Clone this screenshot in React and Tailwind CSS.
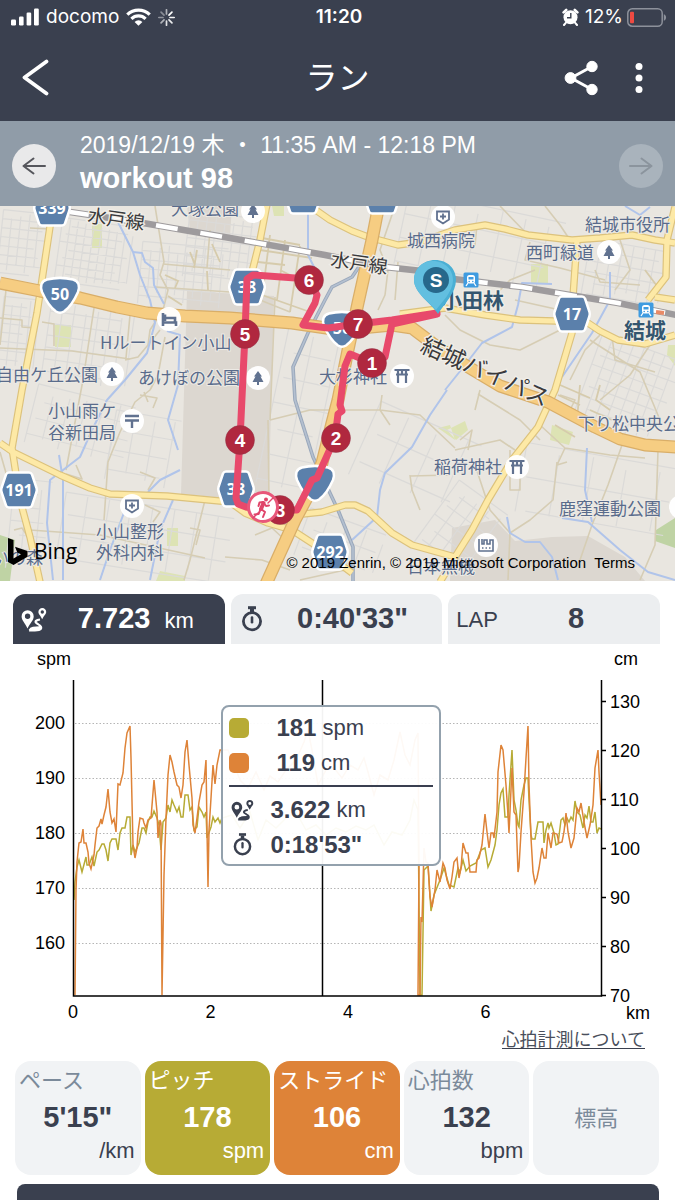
import React from "react";

const SANS = "font-['Liberation_Sans','Noto_Sans_CJK_JP',sans-serif]";

/* ---------- icons ---------- */

function SignalIcon() {
  return (
    <svg width="28" height="18" viewBox="0 0 28 18" fill="#fff" aria-hidden="true">
      <rect x="0" y="11.5" width="5" height="6" rx="1.2" />
      <rect x="8" y="8.5" width="4.6" height="9" rx="1.2" />
      <rect x="15.6" y="4.5" width="4.6" height="13" rx="1.2" />
      <rect x="23" y="0.5" width="4.8" height="17" rx="1.2" />
    </svg>
  );
}

function WifiIcon() {
  return (
    <svg width="25" height="18" viewBox="0 0 25 18" aria-hidden="true">
      <g fill="none" stroke="#fff" strokeWidth="3.2">
        <path d="M1.3 6.6a16 16 0 0 1 22.4 0" />
        <path d="M5.4 10.9a10 10 0 0 1 14.2 0" />
      </g>
      <path d="M12.5 17.8 8.6 13.9a5.6 5.6 0 0 1 7.8 0z" fill="#fff" />
    </svg>
  );
}

const SPOKES = [1, 0.95, 0.9, 0.85, 0.6, 0.45, 0.4, 0.6];

function SpinnerIcon() {
  return (
    <svg width="17" height="17" viewBox="0 0 17 17" aria-hidden="true">
      {SPOKES.map((o, i) => (
        <line key={i} x1="8.5" y1="0.8" x2="8.5" y2="5" stroke="#fff" strokeOpacity={o} strokeWidth="1.7"
          strokeLinecap="round" transform={`rotate(${i * 45 + 45} 8.5 8.5)`} />
      ))}
    </svg>
  );
}

function AlarmIcon() {
  return (
    <svg width="17" height="18" viewBox="0 0 17 18" aria-hidden="true">
      <circle cx="8.5" cy="9.3" r="7" fill="#fff" />
      <path d="M1.600 4.400 4.200 2M15.400 4.400 12.800 2" stroke="#fff" strokeWidth="2.6" strokeLinecap="round" />
      <path d="M3.8 14.8 2 17M13.2 14.8 15 17" stroke="#fff" strokeWidth="2" strokeLinecap="round" />
      <path d="M8.8 5v4.8H5" fill="none" stroke="#3a404f" strokeWidth="1.4" />
    </svg>
  );
}

function BatteryIcon() {
  return (
    <svg width="40" height="19" viewBox="0 0 40 19" aria-hidden="true">
      <rect x="0.8" y="0.8" width="34.4" height="17.4" rx="4.5" fill="none" stroke="#8d919b" strokeWidth="1.5" />
      <path d="M36.8 6.2c3 .9 3 5.7 0 6.6z" fill="#8d919b" />
      <rect x="3" y="3.8" width="4" height="11.4" rx="1" fill="#ee4a42" />
    </svg>
  );
}

function RouteIcon({ className }) {
  return (
    <svg viewBox="0 0 26 25" className={className} fill="currentColor" aria-hidden="true">
      <path d="M6.6 3.2A6.1 6.1 0 0 0 .6 9.4c0 3.6 3.4 6.600 5.900 12 2.700-5.400 6.200-8.400 6.200-12A6.100 6.100 0 0 0 6.600 3.200zm0 8.800a2.700 2.700 0 1 1 0-5.400 2.700 2.700 0 0 1 0 5.400z" />
      <path d="M21.300 1a3.900 3.900 0 0 0-3.900 4c0 2.200 2.100 3.300 3.800 7.300 1.800-4 4-5.100 4-7.300A3.900 3.900 0 0 0 21.300 1zm0 5.700a1.700 1.700 0 1 1 0-3.400 1.700 1.700 0 0 1 0 3.400z" />
      <path d="M19 12.500c-4 .5-5.200 2-3.900 3.300 1.500 1.400 4.200 2 4 3.600-.3 1.700-3.800 1-7 1.500-1.600.3-2.800 1.100-3.500 2.600" fill="none" stroke="currentColor" strokeWidth="2.200" />
      <path d="M8 24.500c.3-3 3-4.600 6.500-4.600 2.800.1 4.800-.7 4.300-2.500 3 1.200 3.200 4.400 1 5.900-2.200 1.400-7.600 1.300-11.800 1.200z" />
    </svg>
  );
}

function StopwatchIcon({ className }) {
  return (
    <svg viewBox="0 0 22 26" className={className} fill="none" stroke="currentColor" aria-hidden="true">
      <circle cx="11" cy="15.300" r="8.600" strokeWidth="2.800" />
      <path d="M7 1.700h8" strokeWidth="3" />
      <path d="M11 3v3.500" strokeWidth="4" />
      <path d="M11 11.500v4.800" strokeWidth="2.600" strokeLinecap="round" />
    </svg>
  );
}

/* ---------- map ---------- */

const ROADS_MINOR = [
  "M155 206 164 262 160 275 168 290 163 310 150 330 148 345 138 357 125 360",
  "M163 264 230 270M210 230 207 268M156 287 230 292M94 308 83 380 66 470M6 290 0 345M148 345 160 330",
  "M0 348 72 351 130 359M42 322 54 324 54 346M30 228 50 229M130 315 126 358M0 318 22 320 22 327 35 328",
  "M150 390 135 402 120 432 108 462 104 520M165 337 158 375 150 390M140 395 157 398 153 408M144 392 148 402",
  "M140 472 155 478 148 490M145 505 160 512 153 522M76 465 82 479 66 474",
  "M30 530 100 535 205 558M205 500 190 560 184 580M0 452 8 480M14 530 22 528 30 540M190 528 200 530 196 545",
  "M270 420 310 410 380 410 420 415 455 448M382 395 380 410 390 425M410 475 412 490 420 510M411 476 450 475",
  "M395 206 380 250 388 270 385 295 378 310M398 262 395 300M260 300 290 312M275 297 270 420M268 420 269 500",
  "M445 245 475 245 477 225M500 206 528 235M515 300 560 310M545 206 560 225 570 240M620 240 630 270 615 290",
  "M530 242 525 260 560 268 605 280M595 270 600 282 640 285M600 335 585 350 570 380M650 345 630 375 600 400",
  "M560 395 575 400 570 410M590 340 640 372 660 420M612 336 615 360 655 372M480 390 475 410M455 450 500 440 515 450",
  "M540 425 565 448 610 455 645 458M478 394 520 420 540 440M565 448 557 465 567 462M557 462 553 500 530 520 510 533 508 580",
  "M622 445 608 485 592 525 580 560M658 450 655 545 640 580M475 465 490 510 510 533M535 270 510 280 490 300",
  "M445 315 460 330 490 345 520 350 560 330M510 450 510 490 520 490 520 475M460 440 472 430 468 450",
  "M225 557 262 560 290 570M300 580 345 570M255 535 272 528 285 540",
];

const BLOCK_STREETS = [
  "M262 238 300 245M260 250 312 258M258 262 285 265M280 270 312 286M262 295 310 312M270 235 263 290M285 240 277 300M300 246 290 312",
  "M212 244 220 262M190 252 195 265M197 250 194 268M165 275 178 281 175 288M207 271 208 290M168 296 182 305",
  "M560 385 590 398M558 395 580 405M600 385 596 400 610 410M555 425 575 437M580 385 577 420M645 270 660 290M590 410 612 420",
];

const GREY_STREETS = [
  { x: 0, y: 212, w: 48, h: 66, a: 6, s: 9 },
  { x: 58, y: 222, w: 72, h: 66, a: 8, s: 8 },
  { x: 140, y: 245, w: 86, h: 62, a: 5, s: 9 },
  { x: 0, y: 298, w: 36, h: 80, a: 6, s: 9 },
  { x: 46, y: 305, w: 88, h: 80, a: 8, s: 12 },
  { x: 30, y: 395, w: 100, h: 60, a: 14, s: 17 },
  { x: 10, y: 480, w: 38, h: 90, a: 6, s: 14 },
  { x: 110, y: 415, w: 66, h: 70, a: 10, s: 20 },
  { x: 60, y: 505, w: 170, h: 68, a: 9, s: 22 },
  { x: 186, y: 215, w: 76, h: 66, a: 7, s: 9 },
  { x: 272, y: 330, w: 60, h: 160, a: 12, s: 26 },
  { x: 400, y: 206, w: 160, h: 75, a: 12, s: 24 },
  { x: 585, y: 245, w: 80, h: 60, a: 10, s: 11 },
  { x: 585, y: 345, w: 86, h: 90, a: 20, s: 11 },
  { x: 360, y: 420, w: 110, h: 80, a: 24, s: 32 },
  { x: 430, y: 490, w: 60, h: 80, a: 36, s: 14 },
  { x: 520, y: 455, w: 150, h: 70, a: 10, s: 34 },
  { x: 300, y: 520, w: 80, h: 50, a: 20, s: 20 },
];

function greyPath({ x, y, w, h, s }) {
  let d = "";
  for (let i = 0; i <= w; i += s) d += `M${x + i} ${y + ((i * 7) % 11)}V${y + h - ((i * 5) % 13)}`;
  for (let j = 0; j <= h; j += s) d += `M${x + ((j * 5) % 15)} ${y + j}H${x + w - ((j * 7) % 17)}`;
  return d;
}

const RIVERS = [
  "M117 220 133 252 140 275 150 300 155 323 147 353 125 380 107 400 92 430 80 457 50 480 47 523 53 580",
  "M133 252 142 253 145 262 153 268 154 285 164 304",
  "M167 331 180 335 178 385 168 420 178 450M180 470 160 480 148 492M173 500 160 530 150 580M59 455 63 480 63 580",
  "M308 206 308 255 322 283",
  "M447 390 430 415 412 447 385 473 380 490 377 517 352 540",
  "M552 284 522 283 518 305 512 327 482 343 465 365 445 390",
  "M610 272 610 300 592 333 562 377M587 448 585 490 592 522M562 518 588 522 620 550 648 572 675 580",
  "M507 517 510 533 525 542 540 542 552 557 558 580M625 206 640 215 650 207",
  "M125 510 110 550 100 580",
];

const MAIN_ROADS = [
  "M51 220 42 280 37 313 22 390 12 448 20 500 30 537 40 582",
  "M0 443 13 452 60 475 90 488 110 494 167 496 230 502 245 513 268 523 292 530 312 543 352 573",
  "M267 204 260 240 252 272",
  "M310 206 330 220 352 231 368 237 398 245 420 242 455 230 485 225 505 229 528 235 572 240 600 238 632 235 655 240 675 243",
  "M675 207 667 240 666 277 648 300M655 297 675 300",
  "M577 240 573 297 572 333 555 390 538 427 512 460 488 500 472 530 455 557 440 582",
  "M400 314 445 308 485 315 520 320 555 321 588 323 600 331 618 340 645 344 675 335",
  "M303 514 322 512 345 505 355 505 368 511 392 533 412 545 455 557",
];

const TRUNK_ROADS = [
  "M0 283 40 291 80 298 117 307 147 313 185 316 230 318 292 323 340 330 392 325 412 328 432 343 455 359 500 386 548 402 595 427 620 439 645 445 676 447",
  "M379 204 372 240 358 303 348 350 338 400 332 423 322 463 310 492 295 520 266 584",
];

const DOUBLE_TRACK = "M380 220 377 232 367 243 365 258 352 277 332 287 325 300 308 333 293 367 295 400 313 457 338 510 353 547 353 581";
const RAILWAY = "M70 212 143 223 230 238 325 255 385 267 422 271 445 278 522 287 618 303 676 315";

const HEX = "M-10-17.500Q-12-17.500-13-15.500L-17.500-2Q-18 0-17.500 2L-13 15.500Q-12 17.500-10 17.500H10Q12 17.500 13 15.500L17.500 2Q18 0 17.500-2L13-15.500Q12-17.500 10-17.500Z";
const TRI = "M-13-16.500C-5-18.500 5-18.500 13-16.500 19-15 20-10 18-4 14 5 9 12 4 15.500 1.500 17-1.500 17-4 15.500-9 12-14 5-18-4-20-10-19-15-13-16.500Z";

function Shield({ x, y, label, tri }) {
  return (
    <g transform={`translate(${x} ${y})`}>
      <path d={tri ? TRI : HEX} fill="#5b80ab" stroke="#fff" strokeWidth="2.500" strokeLinejoin="round" />
      {label && (
        <text y={tri ? 4 : 6} textAnchor="middle" fill="#fff" className="font-['Noto_Sans',sans-serif] text-[16px] font-bold">
          {label}
        </text>
      )}
    </g>
  );
}

const GLYPHS = {
  tree: <path d="M0-7 4-1.500H2.500L5.500 4H1V7H-1V4H-5.500L-2.500-1.500H-4Z" fill="#60718f" />,
  bed: <path d="M-6-6V7M-6 3.500H7V7M-4-1H6V2.500M-4-4.500V2" fill="none" stroke="#60718f" strokeWidth="2.600" />,
  post: <path d="M-7-5H7M-7-.500H7M0 0V7" fill="none" stroke="#60718f" strokeWidth="2.400" />,
  clinic: <path d="M-6-5.500H6V2.500L0 6.500-6 2.500ZM-3-.500H3M0-3.500V2.500" fill="none" stroke="#60718f" strokeWidth="1.800" />,
  shrine: <path d="M-7.500-6H7.500M-6-1.500H6M-4-6V7M4-6V7M0-6V-1" fill="none" stroke="#60718f" strokeWidth="2.200" />,
  factory: <path d="M-7-6V6H7V-5H4V-1H1V-5H-2V-1H-4V-6M-4 3H-2.500M-.500 3H1M3 3H4.500" fill="none" stroke="#60718f" strokeWidth="1.600" />,
};

function Poi({ x, y, kind }) {
  return (
    <g transform={`translate(${x} ${y})`}>
      <circle r="12" fill="#fff" fillOpacity="0.950" />
      {GLYPHS[kind]}
    </g>
  );
}

function Station({ x, y }) {
  return (
    <g transform={`translate(${x} ${y})`}>
      <rect x="-7.500" y="-7.500" width="15" height="15" rx="1.500" fill="#3f9be0" />
      <rect x="-4" y="-5" width="8" height="8.500" rx="2.500" fill="#fff" />
      <rect x="-2.500" y="-3" width="5" height="2.500" fill="#3f9be0" />
      <circle cx="-1.800" cy="1.500" r=".8" fill="#3f9be0" />
      <circle cx="1.800" cy="1.500" r=".8" fill="#3f9be0" />
      <path d="M-3 3-5 6M3 3 5 6" stroke="#fff" strokeWidth="1.300" />
    </g>
  );
}

const PLACES = [
  [171, 215, "大塚公園"], [100, 349, "Hルートイン小山"], [-4, 381, "自由ケ丘公園"], [138, 384, "あけぼの公園"],
  [48, 417, "小山雨ケ"], [48, 439, "谷新田局"], [96, 538, "小山整形"], [96, 559, "外科内科"],
  [407, 247, "城西病院"], [585, 231, "結城市役所"], [526, 259, "西町緑道"], [319, 383, "大杉神社"],
  [578, 430, "下り松中央公"], [434, 473, "稲荷神社"], [559, 515, "鹿窪運動公園"], [407, 573, "日本無機"], [-8, 564, "いの森"],
];

const PINS = [
  [372, 363, 1], [336, 438, 2], [280, 510, 3], [240, 440, 4], [245, 334, 5], [309, 280, 6], [358, 324, 7],
];

function RouteMap() {
  return (
    <svg viewBox="0 206 675 375" className="block h-auto w-full" role="img" aria-label="map">
      <rect y="206" width="675" height="375" fill="#e9e6e0" />
      <path d="M187 206H232L230 236 190 230ZM187 291 274 296 268 522 240 505 181 494Z" fill="#dcd7d0" />
      <path d="M452 528 495 520 515 541 552 537 588 536 625 557 645 581H450Z" fill="#dcd7d0" />
      <path d="M92 224H102V248H92ZM55 325H71V347H55ZM531 264H548V283H531ZM552 425 573 432 569 445 550 440ZM447 430 465 421 468 430 456 440ZM167 528H178V546H167ZM160 571 185 576V581H156ZM272 206H284V216H274ZM668 345H675V366L667 355ZM450 425 438 428 455 440Z" fill="#dde3b4" />
      <path d="M656 530 675 518V548L655 541ZM0 535 15 540 10 581H0Z" fill="#bfd3a4" />
      {GREY_STREETS.map((p, i) => (
        <path key={i} d={greyPath(p)} fill="none" stroke="#dbdad8" strokeWidth="1.200"
          transform={`rotate(${p.a} ${p.x + p.w / 2} ${p.y + p.h / 2})`} />
      ))}
      {ROADS_MINOR.map((d) => <path key={d} d={d} fill="none" stroke="#d6cdb4" strokeWidth="1.600" strokeLinejoin="round" />)}
      {BLOCK_STREETS.map((d) => <path key={d} d={d} fill="none" stroke="#d6cbac" strokeWidth="1.800" />)}
      {RIVERS.map((d) => <path key={d} d={d} fill="none" stroke="#b0c4ea" strokeWidth="2" strokeLinejoin="round" />)}
      <path d={DOUBLE_TRACK} fill="none" stroke="#9aa8bb" strokeWidth="3.600" strokeLinejoin="round" />
      <path d={DOUBLE_TRACK} fill="none" stroke="#b4c0d0" strokeWidth="1.600" strokeLinejoin="round" />
      {MAIN_ROADS.map((d) => <path key={d} d={d} fill="none" stroke="#dcc27c" strokeWidth="7.500" strokeLinejoin="round" />)}
      {MAIN_ROADS.map((d) => <path key={d} d={d} fill="none" stroke="#fde9a6" strokeWidth="5.200" strokeLinejoin="round" />)}
      {TRUNK_ROADS.map((d) => <path key={d} d={d} fill="none" stroke="#d9ae68" strokeWidth="13" strokeLinejoin="round" />)}
      {TRUNK_ROADS.map((d) => <path key={d} d={d} fill="none" stroke="#f6cd82" strokeWidth="10.500" strokeLinejoin="round" />)}

      <path d={RAILWAY} fill="none" stroke="#9e9b9d" strokeWidth="6.500" />
      <path d={RAILWAY} fill="none" stroke="#fff" strokeWidth="4.500" strokeDasharray="22 23" strokeDashoffset="3" />
      <path d="M656 312 664 313" stroke="#e98a66" strokeWidth="4" />

      <Shield x={52} y={208} label="339" />
      <Shield x={303} y={196} />
      <Shield x={382} y={196} />
      <Shield x={60} y={296} label="50" tri />
      <Shield x={342} y={330} label="50" tri />
      <Shield x={315} y={484} tri />
      <Shield x={247} y={287} label="38" />
      <Shield x={572} y={314} label="17" />
      <Shield x={19} y={490} label="191" />
      <Shield x={236} y={489} label="38" />
      <Shield x={330} y={552} label="292" />

      <g fill="#596b8b" stroke="#eceae5" strokeWidth="2" paintOrder="stroke" className="font-['Noto_Sans_CJK_JP',sans-serif] text-[17px]">
        {PLACES.map(([x, y, t]) => <text key={t} x={x} y={y}>{t}</text>)}
      </g>
      <g fill="#3a3a3c" stroke="#f1eee8" strokeWidth="2.500" paintOrder="stroke" className="font-['Noto_Sans_CJK_JP',sans-serif] text-[19px]">
        <text transform="translate(87 222) rotate(8)">水戸線</text>
        <text transform="translate(330 266) rotate(8)">水戸線</text>
        <text transform="translate(419 351) rotate(24)" className="text-[23px]">結城バイパス</text>
      </g>
      <g fill="#34566f" stroke="#f1eee8" strokeWidth="2.500" paintOrder="stroke" className="font-['Noto_Sans_CJK_JP',sans-serif] text-[21px] font-bold">
        <text x="441" y="308">小田林</text>
        <text x="624" y="338">結城</text>
      </g>

      <Poi x={253} y={211} kind="tree" />
      <Poi x={169} y={319} kind="bed" />
      <Poi x={112} y={374} kind="tree" />
      <Poi x={258} y={378} kind="tree" />
      <Poi x={132} y={421} kind="post" />
      <Poi x={132} y={506} kind="clinic" />
      <Poi x={443} y={217} kind="clinic" />
      <Poi x={609} y={252} kind="tree" />
      <Poi x={402} y={376} kind="shrine" />
      <Poi x={517} y={467} kind="shrine" />
      <Poi x={486} y={545} kind="factory" />
      <Poi x={681} y={507} kind="tree" />
      <Station x={471} y={280} />
      <Station x={646} y={310} />

      <path d="M437 314 392 324 385 357 372 363 350 354 345 366 340 405 342 411 338 414 335 438 317 478 312 480 297 510 280 510 246 507 238 504 236 498 240 440 245 334 247 279 253 275 309 279 317 295 315 303 303 325 328 328 358 324 392 320 437 313"
        fill="none" stroke="#e8496b" strokeWidth="7" strokeLinejoin="round" strokeLinecap="round" />

      {PINS.map(([x, y, n]) => (
        <g key={n}>
          <circle cx={x} cy={y} r="14.500" fill="#b0283f" stroke="#8f3347" strokeOpacity="0.450" strokeWidth="1" />
          <text x={x} y={y + 7} textAnchor="middle" fill="#fff" className="font-['Liberation_Sans',sans-serif] text-[19px] font-bold">{n}</text>
        </g>
      ))}

      <circle cx="263" cy="507" r="14.500" fill="#fff" stroke="#e8577a" strokeWidth="3" />
      <g fill="none" stroke="#e0456a" strokeLinecap="round" strokeLinejoin="round">
        <circle cx="266" cy="499.500" r="2" fill="#e0456a" stroke="none" />
        <path d="M263.500 503 261 509" strokeWidth="4" />
        <path d="M258.500 506 259.500 502.500 263 502 266 506 269 505.500M261 509 265 512 263 517M260.500 509.500 258.500 514 254.500 514.500" strokeWidth="2" />
        <path d="M253 518 258 513M268 503 273 498" strokeWidth="1.400" />
      </g>

      <path d="M435 260C448 260 456 269 456 280 456 293 444 304 438 314 432 304 414 293 414 280 414 269 423 260 435 260Z" fill="#4aafd4" />
      <path d="M433 261C445 261 453 270 453 280 453 292 441 303 436 310 430 303 414 292 414 280 414 269 422 261 433 261Z" fill="#62bfe0" />
      <circle cx="436" cy="280" r="13" fill="#27688b" />
      <text x="436" y="287" textAnchor="middle" fill="#fff" className="font-['Liberation_Sans',sans-serif] text-[19px] font-bold">S</text>
    </svg>
  );
}

/* ---------- chart ---------- */

const STRIDE =
  "75,995 76,890 77,862 79,843 81,842 83,829 84,843 86,843 88,852 89,863 91,869 94,855 95,845 97,828 99,826 101,819 102,824 104,815 106,807 108,789 110,812 112,823 114,819 116,832 118,784 120,785 123,773 125,748 127,733 130,726 131,758 133,845 135,858 137,848 138,832 140,818 143,819 144,823 146,828 148,820 151,818 154,780 157,812 158,838 160,820 161,823 162,995 164,875 166,818 168,775 170,755 172,762 174,772 177,785 179,787 181,798 183,785 185,752 187,740 189,765 192,798 193,825 195,833 197,818 199,802 202,785 204,782 206,760 207,830 208,887 209,830 211,798 213,765 215,784 217,765 220,750 228,750 233,762 240,780 248,788 256,772 264,790 270,776 278,782 286,770 296,760 304,742 308,730 312,750 318,785 326,770 334,768 342,778 350,765 358,770 364,758 368,772 374,795 380,775 388,780 394,760 400,732 405,755 410,765 415,740 418,733 419,868 418,995 420,995 421,917 422,922 424,848 426,862 428,863 430,897 432,907 435,890 437,870 440,882 443,863 445,868 447,880 450,889 452,877 454,862 457,858 459,878 461,868 463,843 466,853 468,853 470,872 476,872 477,860 479,858 482,845 485,814 487,832 489,848 491,833 493,833 494,838 497,812 498,772 501,745 503,750 506,785 508,815 509,833 512,768 514,812 516,815 518,872 519,867 521,832 524,792 526,758 528,726 529,785 531,838 533,872 535,883 537,878 539,868 542,848 544,858 546,858 548,833 551,848 553,833 557,834 559,843 562,842 564,832 566,813 568,832 571,848 574,838 577,808 579,812 581,803 584,822 587,838 590,825 593,805 595,768 598,750 599,772 601,805";
const PITCH =
  "74,900 75,882 77,867 79,860 82,872 86,857 87,865 89,865 92,857 94,866 97,852 99,850 102,844 104,844 106,850 108,861 110,843 112,839 116,839 118,850 120,833 122,828 125,828 127,817 130,817 131,855 133,845 135,852 139,843 142,828 144,828 146,833 148,822 150,817 152,817 154,811 157,818 159,825 161,850 163,822 166,818 168,805 170,812 172,800 174,805 177,812 179,807 181,817 183,817 185,795 188,795 190,810 192,807 194,830 197,827 199,807 202,812 204,817 206,812 207,838 211,827 213,817 215,822 218,818 220,823 222,818 232,815 240,828 250,812 258,840 266,820 276,828 286,818 296,812 306,830 316,825 326,835 336,828 346,832 356,826 366,830 374,825 384,845 392,832 402,835 410,820 414,800 418,810 420,995 422,995 424,870 428,866 431,911 434,895 440,880 444,868 449,885 454,887 458,868 460,872 463,860 466,871 470,866 476,863 478,858 481,850 485,848 488,867 491,860 495,845 497,830 499,805 501,793 503,789 505,817 508,817 509,795 512,750 514,800 516,810 518,825 519,827 521,800 524,785 526,778 528,778 529,800 531,835 532,839 535,839 538,822 543,822 544,843 546,830 548,823 549,828 551,823 554,833 556,845 558,844 561,820 563,818 565,825 567,818 569,822 571,817 573,820 575,801 577,812 580,815 583,828 585,815 587,818 589,806 591,822 593,822 595,812 597,833 599,828 601,829";

function Chart() {
  return (
    <svg viewBox="0 644 675 382" className="block h-auto w-full" role="img" aria-label="spm / cm">
      {[723, 778, 833, 888, 943].map((y) => (
        <line key={y} x1="75" x2="600" y1={y + 0.5} y2={y + 0.5} stroke="#b5b5b5" strokeWidth="1" strokeDasharray="1.500 2" />
      ))}
      <polyline points={PITCH} fill="none" stroke="#b7ab35" strokeWidth="1.500" />
      <polyline points={STRIDE} fill="none" stroke="#de8338" strokeWidth="1.500" />
      <path d="M73.500 680V996H601.500V680M322.500 680V996" fill="none" stroke="#000" strokeWidth="1.500" />
      {[130, 120, 110, 100, 90, 80, 70].map((v, i) => (
        <g key={v}>
          <line x1="601" x2="606" y1={701.5 + i * 49} y2={701.5 + i * 49} stroke="#000" strokeWidth="1.500" />
          <text x={610} y={708 + i * 49} className={`text-[18px] ${SANS}`}>{v}</text>
        </g>
      ))}
      <g className={`text-[18px] ${SANS}`}>
        <text x="37" y="665">spm</text>
        <text x="614" y="665">cm</text>
        <text x="626" y="1019">km</text>
        <g textAnchor="end">
          {[200, 190, 180, 170, 160].map((v, i) => <text key={v} x="65" y={729 + i * 55}>{v}</text>)}
        </g>
        <g textAnchor="middle">
          {[0, 2, 4, 6].map((v) => <text key={v} x={73 + v * 68.75} y="1018">{v}</text>)}
        </g>
      </g>
    </svg>
  );
}

function Readout() {
  return (
    <div className="absolute top-[16%] left-[32.8%] flex w-[220px] flex-col rounded-lg border-2 border-[#93a1ad] bg-white/95 px-1.5 pt-[3px] pb-0.5 text-[22px] leading-[35px] text-[#3a404f]">
      <div className="flex items-center">
        <span className="size-5 rounded-[5px] bg-[#b7ab35]" />
        <b className="ml-[27px] text-[24px]">181</b><span className="ml-1.5">spm</span>
      </div>
      <div className="flex items-center">
        <span className="size-5 rounded-[5px] bg-[#de8338]" />
        <b className="ml-[27px] text-[24px]">119</b><span className="ml-1.5">cm</span>
      </div>
      <hr className="my-[5px] border-t-2 border-[#3a3f50]" />
      <div className="flex items-center">
        <RouteIcon className="ml-0.5 h-[22px] w-[23px]" />
        <b className="ml-4 text-[24px]">3.622</b><span className="ml-1.5">km</span>
      </div>
      <div className="flex items-center">
        <StopwatchIcon className="ml-0.5 h-[23px] w-[23px]" />
        <b className="ml-4 text-[24px]">0:18'53"</b>
      </div>
    </div>
  );
}

/* ---------- page parts ---------- */

const METRICS = [
  { label: "ペース", value: "5'15\"", unit: "/km", box: "bg-[#f1f3f5] text-[#3a404f]", head: "text-[#7b8a9a]" },
  { label: "ピッチ", value: "178", unit: "spm", box: "bg-[#b7ab35] text-white", head: "text-white" },
  { label: "ストライド", value: "106", unit: "cm", box: "bg-[#de8338] text-white", head: "text-white" },
  { label: "心拍数", value: "132", unit: "bpm", box: "bg-[#f1f3f5] text-[#3a404f]", head: "text-[#7b8a9a]" },
];

export default function App() {
  return (
    <div className={`flex min-h-screen flex-col bg-white ${SANS}`}>
      <header className="bg-[#3a404f] text-white">
        <div className="grid h-[34px] grid-cols-[1fr_auto_1fr] items-center pr-2 pl-[11px] font-['Inter',sans-serif] text-[19px]">
          <div className="flex items-center gap-[7px]">
            <SignalIcon />
            <span>docomo</span>
            <WifiIcon />
            <SpinnerIcon />
          </div>
          <span className="font-semibold">11:20</span>
          <div className="flex items-center justify-end">
            <AlarmIcon />
            <span className="mr-1 ml-1.5">12%</span>
            <BatteryIcon />
          </div>
        </div>
        <div className="grid h-[87px] grid-cols-[1fr_auto_1fr] items-center px-5">
          <button type="button" aria-label="back" className="justify-self-start">
            <svg width="30" height="38" viewBox="0 0 30 38" fill="none" stroke="#fff" strokeWidth="3.800" strokeLinecap="round" strokeLinejoin="round">
              <path d="M26.500 2.500 4.500 18.500 26.500 34.500" />
            </svg>
          </button>
          <h1 className="text-[32px] leading-none">ラン</h1>
          <div className="flex items-center justify-end">
            <button type="button" aria-label="share" className="mr-9">
              <svg width="36" height="36" viewBox="0 0 36 36" fill="#fff" stroke="#fff">
                <path d="M29 6.500 8 18 29 29.500" fill="none" strokeWidth="3" />
                <circle cx="29" cy="6.500" r="5.200" />
                <circle cx="7.500" cy="18" r="5.400" />
                <circle cx="29" cy="29.500" r="5.200" />
              </svg>
            </button>
            <button type="button" aria-label="menu" className="mr-3">
              <svg width="8" height="32" viewBox="0 0 8 32" fill="#fff">
                <circle cx="4" cy="4.500" r="3.500" />
                <circle cx="4" cy="16" r="3.500" />
                <circle cx="4" cy="27.500" r="3.500" />
              </svg>
            </button>
          </div>
        </div>
      </header>

      <section className="flex h-[85px] items-center bg-[#909ca8] px-3 text-white">
        <button type="button" aria-label="previous" className="mt-1 flex size-11 shrink-0 items-center justify-center rounded-full bg-[#e9e9ea]">
          <svg width="24" height="18" viewBox="0 0 24 18" fill="none" stroke="#55565c" strokeWidth="2" strokeLinecap="round" strokeLinejoin="round">
            <path d="M23 9H1.500M11.500 1.500 1.500 9 11.500 16.500" />
          </svg>
        </button>
        <div className="ml-6 flex-1 pb-1">
          <p className="text-[23px] leading-8">2019/12/19 木 ・ 11:35 AM - 12:18 PM</p>
          <h2 className="text-[29px] leading-[34px] font-bold">workout 98</h2>
        </div>
        <button type="button" aria-label="next" className="mt-1 flex size-11 shrink-0 items-center justify-center rounded-full bg-[#a9b3bc]">
          <svg width="24" height="18" viewBox="0 0 24 18" fill="none" stroke="#8b949d" strokeWidth="2" strokeLinecap="round" strokeLinejoin="round">
            <path d="M1 9H22.500M12.500 1.500 22.500 9 12.500 16.500" />
          </svg>
        </button>
      </section>

      <section className="relative">
        <RouteMap />
        <div className="absolute bottom-4 left-2 flex items-center gap-1.5 font-['Open_Sans',sans-serif] text-[21px] leading-7 text-black">
          <svg width="20" height="27" viewBox="0 0 20 27" aria-hidden="true">
            <path d="M0 0 5.500 2V20.500L13 16.200 9.300 14.500 7 8.800 19.500 13V18.800L5.500 27 0 24Z" />
          </svg>
          Bing
        </div>
        <div className="absolute right-10 bottom-2 flex gap-2 text-[15px] leading-5 text-black">
          <span>© 2019 Zenrin, © 2019 Microsoft Corporation</span>
          <a href="#terms">Terms</a>
        </div>
      </section>

      <div role="tablist" className="mt-[13px] grid grid-cols-3 gap-1.5 pr-[15px] pl-[13px] text-[29px] font-bold text-[#3a404f]">
        <button type="button" role="tab" aria-selected="true" className="flex h-[50px] items-center rounded-t-xl bg-[#3a404f] pl-2 text-white">
          <RouteIcon className="h-[25px] w-[26px]" />
          <span className="flex-1">
            7.723 <span className="ml-1.5 text-[22px] font-normal">km</span>
          </span>
        </button>
        <button type="button" role="tab" aria-selected="false" className="flex h-[50px] items-center rounded-t-xl bg-[#eceef0] pl-2.5">
          <StopwatchIcon className="h-[26px] w-[22px]" />
          <span className="flex-1">0:40'33"</span>
        </button>
        <button type="button" role="tab" aria-selected="false" className="flex h-[50px] items-center rounded-t-xl bg-[#eceef0] pl-2">
          <span className="text-[22px] font-normal">LAP</span>
          <span className="flex-1 pr-1.5">8</span>
        </button>
      </div>

      <section className="relative">
        <Chart />
        <Readout />
      </section>

      <div className="flex h-[35px] justify-end pr-[30px]">
        <a href="#heart-rate" className="h-[23px] border-b border-[#3a404f] text-[18px] leading-7 text-[#4a4f5c]">心拍計測について</a>
      </div>

      <div className="grid grid-cols-5 gap-1 pr-4 pl-[15px]">
        {METRICS.map((m) => (
          <button key={m.label} type="button" className={`flex h-[114px] flex-col rounded-2xl px-1 py-1 text-[22px] ${m.box}`}>
            <span className={`text-left leading-8 whitespace-nowrap ${m.head}`}>{m.label}</span>
            <b className="text-center text-[29px] leading-10">{m.value}</b>
            <span className="pr-0.5 text-right leading-7">{m.unit}</span>
          </button>
        ))}
        <button type="button" className="flex h-[114px] items-center justify-center rounded-2xl bg-[#f1f3f5] text-[22px] text-[#7b8a9a]">標高</button>
      </div>

      <div className="mt-[9px] mr-4 ml-[17px] flex-1 rounded-t-lg bg-[#3a404f]" />
    </div>
  );
}
